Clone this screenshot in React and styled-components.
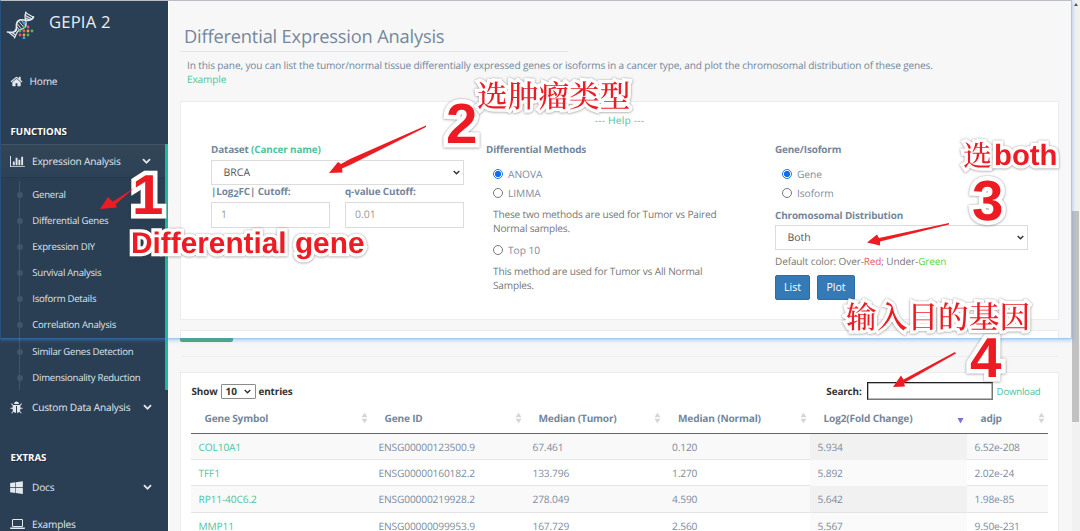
import React from "react";
import styled, { createGlobalStyle, css } from "styled-components";

const Global = createGlobalStyle`
  * { box-sizing: border-box; }
  html, body { margin: 0; padding: 0; }
  body {
    width: 1080px; height: 531px; overflow: hidden; background: #f7f7f7;
    font-family: "Open Sans", "Noto Sans", "Noto Sans CJK SC", sans-serif;
    font-size: 10.2px; color: #73879c; text-rendering: geometricPrecision;
  }
`;

const Page = styled.div`
  position: relative; display: flex; width: 1080px; height: 531px; overflow: hidden;
`;

/* ---------- sidebar ---------- */
const Sidebar = styled.nav`
  width: 168px; flex: none; height: 531px; background: #2a3f54; color: #e3e8ed;
  display: flex; flex-direction: column; overflow: hidden;
`;
const Brand = styled.div`
  height: 45px; display: flex; align-items: center; padding-left: 6px; gap: 14px;
  font-size: 16.6px; color: #ecf0f1; flex: none;
  svg { width: 29px; height: 29px; margin-top: 3px; }
  span { letter-spacing: 0.2px; margin-top: -2px; }
`;
const Item = styled.div`
  display: flex; align-items: center; flex: none; height: ${(p) => p.$h || 34}px;
  padding: 0 ${(p) => (p.$active ? 14 : 16)}px 0 10px; font-size: 10.1px; letter-spacing: -0.17px;
  span { flex: 1; margin-left: ${(p) => p.$gap ?? 8}px; }
  ${(p) => p.$active && css`
    background: linear-gradient(#334556, #2c4257), #2a3f54;
    box-shadow: inset 0 1px 0 #42566a, inset 0 -1px 0 #26394d;
  `}
`;
const Heading = styled.h3`
  margin: ${(p) => p.$top}px 0 0; height: 24px; line-height: 24px; padding-left: 10.5px; flex: none;
  font-size: 9.7px; font-weight: 700; color: #fff; letter-spacing: 0; text-shadow: 1px 1px #1d2c3b;
`;
const Group = styled.div`
  border-right: 3px solid #1abb9c; height: 246px; flex: none;
`;
const SubMenu = styled.ul`
  list-style: none; margin: 3px 0 0 19px; padding: 0; border-left: 1px solid #425668; height: 209px;
`;
const SubItem = styled.li`
  height: 26.1px; display: flex; align-items: center; font-size: 9.6px; white-space: nowrap;
  letter-spacing: -0.26px; color: #dfe4e9;
  &::before {
    content: ""; width: 6px; height: 6px; border-radius: 50%; background: #425668;
    margin: 1px 9.8px 0 -3.5px;
  }
`;

const PATHS = {
  home: ["0 0 1792 1792", "M1472 992v480q0 26-19 45t-45 19h-384v-384h-256v384h-384q-26 0-45-19t-19-45v-480q0-1 .5-3t.5-3l575-474 575 474q1 2 1 6zm223-69l-62 74q-8 9-21 11h-3q-13 0-21-7l-692-577-692 577q-12 8-24 7-13-2-21-11l-62-74q-8-10-7-23.5t11-21.5l719-599q32-26 76-26t76 26l244 204v-195q0-14 9-23t23-9h192q14 0 23 9t9 23v408l219 182q10 8 11 21.5t-7 23.5z"],
  chart: ["0 0 2048 1792", "M640 896v512h-256v-512h256zm384-512v1024h-256v-1024h256zm1024 1152v128h-2048v-1536h128v1408h1920zm-640-896v768h-256v-768h256zm384-384v1152h-256v-1152h256z"],
  bug: ["0 0 1664 1700", "M1632 960q0 26-19 45t-45 19h-224q0 171-67 290l208 209q19 19 19 45t-19 45q-18 19-45 19t-45-19l-198-197q-5 5-15 13t-42 28.5-65 36.5-82 29-97 13v-896h-128v896q-51 0-101.5-13.5t-87-33-66-39-43.5-32.5l-15-14-183 207q-20 21-48 21-24 0-43-16-19-18-20.5-44.5t15.5-46.5l202-227q-58-114-58-274h-224q-26 0-45-19t-19-45 19-45 45-19h224v-294l-173-173q-19-19-19-45t19-45 45-19 45 19l173 173h844l173-173q19-19 45-19t45 19 19 45-19 45l-173 173v294h224q26 0 45 19t19 45zm-480-576h-640q0-133 93.5-226.5t226.5-93.5 226.5 93.5 93.5 226.5z"],
  windows: ["0 100 1664 1700", "M682 1006v651l-682-94v-557h682zm0-743v659h-682v-565zm982 743v786l-907-125v-661h907zm0-878v794h-907v-669z"],
  laptop: ["0 128 1920 1536", "M416 1280q-66 0-113-47t-47-113v-704q0-66 47-113t113-47h1088q66 0 113 47t47 113v704q0 66-47 113t-113 47h-1088zm-32-864v704q0 13 9.5 22.5t22.5 9.5h1088q13 0 22.5-9.5t9.5-22.5v-704q0-13-9.5-22.5t-22.5-9.5h-1088q-13 0-22.5 9.5t-9.5 22.5zm1376 928h160v96q0 40-47 68t-113 28h-1600q-66 0-113-28t-47-68v-96h1760z"],
  chevron: ["0 300 1792 1400", "M1683 808l-742 741q-19 19-45 19t-45-19l-742-741q-19-19-19-45.5t19-45.5l166-165q19-19 45-19t45 19l531 531 531-531q19-19 45-19t45 19l166 165q19 19 19 45.5t-19 45.5z"],
};
const Glyph = styled.svg`
  width: ${(p) => p.$w}px; height: ${(p) => p.$h}px; fill: #e3e8ed; flex: none;
`;
const Icon = ({ name, w = 13, h = 13 }) => (
  <Glyph viewBox={PATHS[name][0]} $w={w} $h={h}><path d={PATHS[name][1]} /></Glyph>
);

const DOTS = [
  [18, 13, "#3fa0e0"], [18, 17, "#57b947"], [22, 17, "#e8548a"], [22, 21, "#f0a33c"], [26, 21, "#57b947"],
  [14, 21, "#57b947"], [18, 21, "#e8548a"], [14, 25, "#e8548a"], [18, 25, "#f0a33c"], [22, 25, "#57b947"], [18, 28, "#3fa0e0"],
];
const Logo = () => (
  <svg viewBox="0 0 29 29" fill="none">
    <g stroke="#e6ebef" strokeLinecap="round">
      <path d="M1.500 22 C7 23 11 22 10.500 17 C10 11 13 9 18 10 C23 11 26 10 27.500 7" strokeWidth="1.700" />
      <path d="M8.500 28 C10 25 10 23 13 20 C17 19 21 18 20 12 C19 8 18 6 20 2" strokeWidth="1.200" />
      <path d="M20 3 L27 7 M19.500 5.500 L25 8.500 M20 8 L23 9.500 M3 22.500 L8.500 27 M6 22.500 L9.500 25" strokeWidth="1.100" />
      <path d="M11.500 14 L15 18.500 M13 11.500 L17.500 17 M15.500 10.500 L19.500 15 M11 17 L13 19.500" strokeWidth="0.900" />
    </g>
    {DOTS.map(([x, y, c]) => <circle key={`${x}-${y}`} cx={x} cy={y} r="1.400" fill={c} />)}
  </svg>
);

/* ---------- main column ---------- */
const Main = styled.main`
  width: 904px; flex: none; padding: 0 13px 0 12px; border-left: 1px solid #fff; margin-right: 0;
  display: flex; flex-direction: column;
`;
const Title = styled.h1`
  margin: 23px 0 0 -1px; width: 388px; height: 29px; line-height: 28px; padding-left: 4px; flex: none;
  border-bottom: 1px solid #e2e4e9; font-size: 18.3px; font-weight: 400; white-space: nowrap;
  letter-spacing: -0.19px;
`;
const Intro = styled.div`
  margin: 7px 0 0 6px; line-height: 13.4px; height: 42px; padding-top: 0.3px; flex: none; white-space: nowrap;
  font-size: 10.1px; letter-spacing: -0.135px;
`;
const Link = styled.a`color: #4fc3a1;`;
const Panel = styled.section`
  background: #fff; border: 1px solid #ececee; width: 879px; margin-left: -1px; flex: none;
  height: ${(p) => p.$h}px;
`;
const HelpLine = styled.div`
  height: 38px; line-height: 37px; text-align: center; color: #4fc3a1; letter-spacing: 0.22px;
`;
const FormGrid = styled.div`
  display: grid; grid-template-columns: 275px 289px 253px; padding-left: 30px;
`;
const Col = styled.div`display: flex; flex-direction: column;`;
const Label = styled.label`
  font-weight: 700; font-size: 9.9px; white-space: nowrap; height: ${(p) => p.$h}px; line-height: ${(p) => p.$line}px;
  letter-spacing: -0.13px;
`;
const Sub = styled.sub`font-size: 9.5px; vertical-align: -2px; line-height: 0;`;
const SelectBox = styled.div`
  width: 253px; height: 25px; border: 1px solid #dcdcdc; background: #fff; color: #555; font-size: 10.5px;
  display: flex; align-items: center; justify-content: space-between; padding: 0 3.500px 0 11.500px;
`;
const Caret = styled.svg`width: 7px; height: 5px; fill: none; stroke: #333; stroke-width: 1.400;`;
const Pair = styled.div`display: flex; gap: 15px;`;
const Field = styled.div`
  width: 119px; height: 26px; border: 1px solid #dcdcdc; color: #9a9a9a; line-height: 25px; padding-left: 9px; font-size: 10.5px;
`;
const Choice = styled.div`
  display: flex; align-items: center; gap: 5px; height: 19px; padding-left: 7px; font-size: 10.2px;
  margin-top: ${(p) => p.$top || 0}px; color: #7b8da1; letter-spacing: -0.05px;
`;
const Radio = styled.span`
  width: 10px; height: 10px; border-radius: 50%; border: 1px solid ${(p) => (p.$on ? "#1a78f0" : "#777")};
  background: ${(p) => (p.$on ? "radial-gradient(circle, #0b6ff0 0 2.800px, #fff 3.400px)" : "#fff")};
`;
const Note = styled.p`
  margin: ${(p) => p.$top}px 0 0 7px; line-height: 13.800px; color: #777; white-space: nowrap; font-size: 10.1px;
  letter-spacing: -0.17px;
`;
const ColorNote = styled.div`height: 24.5px; line-height: 22px; color: #777; font-size: 10px; letter-spacing: -0.11px;`;
const Tint = styled.span`color: ${(p) => p.$c};`;
const Buttons = styled.div`display: flex; gap: 7px;`;
const Button = styled.button`
  width: ${(p) => p.$w}px; height: 25px; border: 1px solid #2e6da4; border-radius: 2px; background: #337ab7; color: #fff;
  font: 400 10.600px "Open Sans", sans-serif; padding: 0;
`;
const PeekPanel = styled.div`
  margin: 10px 0 0 -1px; height: 8px; width: 879px; background: #fff; border: 1px solid #ececee; border-bottom: 0; flex: none;
`;
const GreenTag = styled.div`
  width: 53px; height: 4px; background: #4cae67; border-radius: 0 0 2px 2px; margin-left: -1px; flex: none;
`;
const Rule = styled.div`height: 1px; background: #eeeef0; margin: 14px 0 15px; flex: none;`;

const Tools = styled.div`
  display: flex; align-items: center; height: 19px; margin: 8.5px 17.500px 0 10.500px; color: #333; font-weight: 700; font-size: 9.900px;
  white-space: nowrap; letter-spacing: -0.12px;
`;
const CountSelect = styled.div`
  display: flex; align-items: center; justify-content: space-between; width: 35px; height: 15px; margin: 0 3px;
  border: 1px solid #8b8b8b; border-radius: 1px; padding: 0 4px; font-size: 10px;
`;
const Spacer = styled.div`flex: 1;`;
const SearchBox = styled.div`
  width: 126px; height: 18px; border: 1px solid #777; border-top-color: #222; border-left-color: #222;
  margin: 0 4px 0 5px; box-shadow: inset 0 0 0 0.500px #777;
`;
const DownloadLink = styled(Link)`font-weight: 400; font-size: 9.7px; letter-spacing: -0.25px;`;
const Table = styled.div`width: 857px; margin-left: 10px; margin-top: 2px;`;
const Row = styled.div`
  display: grid; grid-template-columns: 180px 154px 139.500px 145.500px 157px 81px;
  height: 26.400px; border-bottom: 1px solid #e4e4e4; background: ${(p) => (p.$odd ? "#f9f9f9" : "#fff")};
`;
const HeadRow = styled(Row)`height: 31px; border-bottom: 1px solid #666; background: #fff;`;
const Th = styled.div`
  display: flex; align-items: center; justify-content: space-between; padding: 1px 3.500px 0 13.500px;
  font-weight: 700; font-size: 10.1px; white-space: nowrap; letter-spacing: -0.16px;
`;
const Td = styled.div`
  padding-left: 7.500px; line-height: 26px; font-size: 10.200px; white-space: nowrap; letter-spacing: -0.15px;
  color: ${(p) => (p.$link ? "#4fc3a1" : "#7b8da1")};
  background: ${(p) => (p.$sorted ? (p.$odd ? "#f1f1f1" : "#fafafa") : "transparent")};
`;
const SortSvg = styled.svg`width: 7px; height: 12px;`;
const Sort = ({ active }) => (
  <SortSvg viewBox="0 0 7 12">
    {active ? <path d="M0.500 6 H6.500 L3.500 11.500Z" fill="#7672dc" /> : <path d="M0.500 5.300 L3.500 0.800 L6.500 5.300Z M0.500 6.700 H6.500 L3.500 11.200Z" fill="#d5d5d8" />}
  </SortSvg>
);
const Down = () => <Caret viewBox="0 0 7 5"><path d="M0.700 0.900 L3.500 3.700 L6.300 0.900" /></Caret>;

const HEADS = ["Gene Symbol", "Gene ID", "Median (Tumor)", "Median (Normal)", "Log2(Fold Change)", "adjp"];
const ROWS = [
  ["COL10A1", "ENSG00000123500.9", "67.461", "0.120", "5.934", "6.52e-208"],
  ["TFF1", "ENSG00000160182.2", "133.796", "1.270", "5.892", "2.02e-24"],
  ["RP11-40C6.2", "ENSG00000219928.2", "278.049", "4.590", "5.642", "1.98e-85"],
  ["MMP11", "ENSG00000099953.9", "167.729", "2.560", "5.567", "9.50e-231"],
];
const SUBS = ["General", "Differential Genes", "Expression DIY", "Survival Analysis", "Isoform Details", "Correlation Analysis", "Similar Genes Detection", "Dimensionality Reduction"];

/* ---------- scrollbar, window frame, annotations ---------- */
const Scrollbar = styled.div`
  width: 8px; height: 531px; background: #f1f1f1; padding-top: 3px; flex: none;
  &::before { content: ""; display: block; margin: 0 auto; width: 0; border: 2px solid transparent; border-top: 0; border-bottom: 3px solid #555; }
`;
const Thumb = styled.div`height: 211px; margin-top: 205px; background: #c1c1c1; width: 7px;`;
const Frame = styled.div`
  position: absolute; left: 0; top: 0; width: 1072px; height: 339px; pointer-events: none;
  border: 1px solid rgba(70, 145, 225, 0.45); border-top-color: #b9bec6; border-left-color: #28507c;
  box-shadow: 0 1px 4px rgba(70, 145, 235, 0.5);
`;
const Mark = styled.div`
  position: absolute; left: ${(p) => p.$x}px; top: ${(p) => p.$y}px; line-height: 1; white-space: nowrap;
  font-family: "Liberation Sans", "Noto Sans CJK SC", sans-serif; font-weight: 700;
  font-size: ${(p) => p.$size}px; letter-spacing: ${(p) => p.$ls || 0}px; color: #ed1c24;
  -webkit-text-stroke: 6.5px #fff; paint-order: stroke fill; stroke-linejoin: round;
  filter: drop-shadow(0 0 1px rgba(60, 60, 60, 0.4)) drop-shadow(0 1px 1px rgba(60, 60, 60, 0.2));
`;
const Digit = styled(Mark)`-webkit-text-stroke-width: 9px;`;
const Han = styled(Mark)`
  font-family: "Noto Serif CJK SC", "Noto Sans CJK SC", serif; font-weight: 500;
`;
const Arrows = styled.svg`position: absolute; left: 0; top: 0; width: 1080px; height: 531px; fill: #ed1c24; pointer-events: none;`;

export default function App() {
  return (
    <>
      <Global />
      <Page>
        <Sidebar>
          <Brand><Logo /><span>GEPIA 2</span></Brand>
          <Item $h={72} $gap={6.5}><Icon name="home" /><span>Home</span></Item>
          <Heading $top={3.4}>FUNCTIONS</Heading>
          <Group>
            <Item $active $gap={7}><Icon name="chart" w={15} h={13} /><span>Expression Analysis</span><Icon name="chevron" w={9} h={8} /></Item>
            <SubMenu>{SUBS.map((s) => <SubItem key={s}>{s}</SubItem>)}</SubMenu>
          </Group>
          <Item $gap={9}><Icon name="bug" /><span>Custom Data Analysis</span><Icon name="chevron" w={9} h={8} /></Item>
          <Heading $top={22}>EXTRAS</Heading>
          <Item $gap={9} $h={34}><Icon name="windows" /><span>Docs</span><Icon name="chevron" w={9} h={8} /></Item>
          <Item $gap={7} $h={39}><Icon name="laptop" w={15} h={12} /><span>Examples</span></Item>
        </Sidebar>

        <Main>
          <Title>Differential Expression Analysis</Title>
          <Intro>
            In this pane, you can list the tumor/normal tissue differentially expressed genes or isoforms in a cancer type, and plot the chromosomal distribution of these genes.<br />
            <Link>Example</Link>
          </Intro>
          <Panel $h={219}>
            <HelpLine>--- Help ---</HelpLine>
            <FormGrid>
              <Col>
                <Label $h={20} $line={18}>Dataset <Link as="span">(Cancer name)</Link></Label>
                <SelectBox>BRCA<Down /></SelectBox>
                <Pair>
                  <Col><Label $h={17} $line={13}>|Log<Sub>2</Sub>FC| Cutoff:</Label><Field>1</Field></Col>
                  <Col><Label $h={17} $line={13}>q-value Cutoff:</Label><Field>0.01</Field></Col>
                </Pair>
              </Col>
              <Col>
                <Label $h={20} $line={18}>Differential Methods</Label>
                <Choice $top={4.5}><Radio $on />ANOVA</Choice>
                <Choice><Radio />LIMMA</Choice>
                <Note $top={5.5}>These two methods are used for Tumor vs Paired<br />Normal samples.</Note>
                <Choice $top={5}><Radio />Top 10</Choice>
                <Note $top={5.5}>This method are used for Tumor vs All Normal<br />Samples.</Note>
              </Col>
              <Col>
                <Label $h={20} $line={18}>Gene/Isoform</Label>
                <Choice $top={4.5}><Radio $on />Gene</Choice>
                <Choice><Radio />Isoform</Choice>
                <Label $h={22.5} $line={24}>Chromosomal Distribution</Label>
                <SelectBox>Both<Down /></SelectBox>
                <ColorNote>Default color: Over-<Tint $c="#f0566a">Red</Tint>; Under-<Tint $c="#4fd83c">Green</Tint></ColorNote>
                <Buttons><Button $w={35}>List</Button><Button $w={38}>Plot</Button></Buttons>
              </Col>
            </FormGrid>
          </Panel>
          <PeekPanel />
          <GreenTag />
          <Rule />
          <Panel $h={190}>
            <Tools>
              Show<CountSelect>10<Down /></CountSelect>entries
              <Spacer />
              Search:<SearchBox /><DownloadLink>Download</DownloadLink>
            </Tools>
            <Table>
              <HeadRow>{HEADS.map((h, i) => <Th key={h}>{h}<Sort active={i === 4} /></Th>)}</HeadRow>
              {ROWS.map((r, n) => (
                <Row key={r[0]} $odd={n % 2 === 0}>
                  {r.map((c, i) => <Td key={c} $link={i === 0} $sorted={i === 4} $odd={n % 2 === 0}>{c}</Td>)}
                </Row>
              ))}
            </Table>
          </Panel>
        </Main>
        <Scrollbar><Thumb /></Scrollbar>

        <Frame />
        <Digit $x={132} $y={167} $size={56.5}>1</Digit>
        <Mark $x={131} $y={228.5} $size={29.8}>Differential gene</Mark>
        <Digit $x={446} $y={96} $size={56.5}>2</Digit>
        <Han $x={477} $y={79} $size={30.7}>选肿瘤类型</Han>
        <Han $x={963} $y={140} $size={29}>选</Han>
        <Mark $x={994} $y={140.5} $size={29.3}>both</Mark>
        <Digit $x={972} $y={173} $size={56.5}>3</Digit>
        <Digit $x={970} $y={330} $size={56.5}>4</Digit>
        <Han $x={846} $y={300} $size={30.7}>输入目的基因</Han>
        <Arrows viewBox="0 0 1080 531">
          <path d="M134 188 L113 201.500 L110.500 199.500 L108 197 L100 209 L117 207.500 L115.500 204.500 Z" />
          <path d="M426 125.500 L350 159 L341 164 L338 162 L329 173 L342.500 172.500 L342 168.500 L352 164 L426 127 Z" />
          <path d="M949 223 L949 224.500 L880 241.500 L880 245.500 L867 242.500 L877 234.500 L879 238 Z" />
          <path d="M955 352 L956 353.500 L904 383 L905 386.500 L893 387 L901 375.500 L903.500 379.500 Z" />
        </Arrows>
      </Page>
    </>
  );
}
